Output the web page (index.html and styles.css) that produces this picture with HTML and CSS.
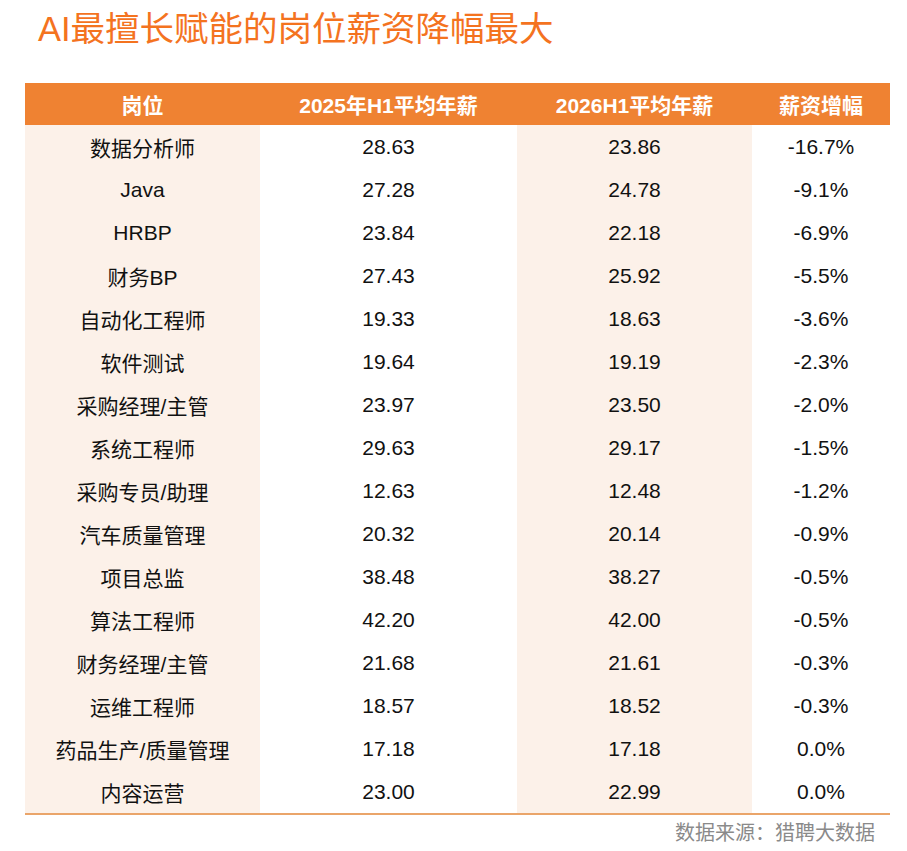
FILE: index.html
```html
<!DOCTYPE html>
<html lang="zh-CN">
<head>
<meta charset="utf-8">
<title>AI最擅长赋能的岗位薪资降幅最大</title>
<link rel="stylesheet" href="styles.css">
</head>
<body>
<div class="page">
  <h1 class="title">AI最擅长赋能的岗位薪资降幅最大</h1>
  <table class="tbl">
    <colgroup>
      <col class="w1"><col class="w2"><col class="w3"><col class="w4">
    </colgroup>
    <thead>
      <tr><th>岗位</th><th>2025年H1平均年薪</th><th>2026H1平均年薪</th><th>薪资增幅</th></tr>
    </thead>
    <tbody>
      <tr><td class="tint">数据分析师</td><td>28.63</td><td class="tint">23.86</td><td>-16.7%</td></tr>
      <tr><td class="tint">Java</td><td>27.28</td><td class="tint">24.78</td><td>-9.1%</td></tr>
      <tr><td class="tint">HRBP</td><td>23.84</td><td class="tint">22.18</td><td>-6.9%</td></tr>
      <tr><td class="tint">财务BP</td><td>27.43</td><td class="tint">25.92</td><td>-5.5%</td></tr>
      <tr><td class="tint">自动化工程师</td><td>19.33</td><td class="tint">18.63</td><td>-3.6%</td></tr>
      <tr><td class="tint">软件测试</td><td>19.64</td><td class="tint">19.19</td><td>-2.3%</td></tr>
      <tr><td class="tint">采购经理/主管</td><td>23.97</td><td class="tint">23.50</td><td>-2.0%</td></tr>
      <tr><td class="tint">系统工程师</td><td>29.63</td><td class="tint">29.17</td><td>-1.5%</td></tr>
      <tr><td class="tint">采购专员/助理</td><td>12.63</td><td class="tint">12.48</td><td>-1.2%</td></tr>
      <tr><td class="tint">汽车质量管理</td><td>20.32</td><td class="tint">20.14</td><td>-0.9%</td></tr>
      <tr><td class="tint">项目总监</td><td>38.48</td><td class="tint">38.27</td><td>-0.5%</td></tr>
      <tr><td class="tint">算法工程师</td><td>42.20</td><td class="tint">42.00</td><td>-0.5%</td></tr>
      <tr><td class="tint">财务经理/主管</td><td>21.68</td><td class="tint">21.61</td><td>-0.3%</td></tr>
      <tr><td class="tint">运维工程师</td><td>18.57</td><td class="tint">18.52</td><td>-0.3%</td></tr>
      <tr><td class="tint">药品生产/质量管理</td><td>17.18</td><td class="tint">17.18</td><td>0.0%</td></tr>
      <tr><td class="tint">内容运营</td><td>23.00</td><td class="tint">22.99</td><td>0.0%</td></tr>
    </tbody>
  </table>
  <div class="source">数据来源：猎聘大数据</div>
</div>
</body>
</html>
```

FILE: styles.css
```css
html, body {
  margin: 0;
  padding: 0;
  background: #ffffff;
}

.page {
  width: 907px;
  font-family: "Liberation Sans", "Noto Sans CJK SC", sans-serif;
  color: #111111;
}

.title {
  margin: 0;
  height: 83px;
  padding: 7px 0 0 38px;
  box-sizing: border-box;
  font-size: 34.5px;
  line-height: 44px;
  font-weight: 400;
  color: #f4731f;
}

.tbl {
  margin-left: 25px;
  width: 865px;
  border-collapse: collapse;
  table-layout: fixed;
  border-bottom: 2px solid #eaa56a;
}

.w1 { width: 235px; }
.w2 { width: 257px; }
.w3 { width: 235px; }
.w4 { width: 138px; }

.tbl th {
  height: 42px;
  padding: 0;
  background: #ef8232;
  color: #ffffff;
  font-size: 21px;
  font-weight: 700;
  text-align: center;
  vertical-align: middle;
}

.tbl td {
  height: 43px;
  padding: 0;
  font-size: 21px;
  text-align: center;
  vertical-align: middle;
  background: #ffffff;
}

.tbl td.tint {
  background: #fcf1e9;
}

.source {
  width: 875px;
  padding-top: 5px;
  text-align: right;
  font-size: 20px;
  line-height: 26px;
  color: #8a8a8a;
}
```
